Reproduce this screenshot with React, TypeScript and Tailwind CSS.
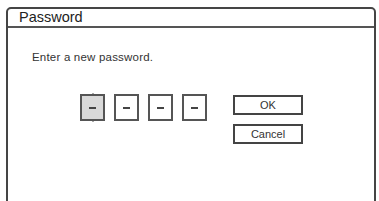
export default function App() {
  const font = { fontFamily: '"Liberation Sans", Arial, sans-serif' };
  return (
    <div className="w-[379px] h-[201px] overflow-hidden bg-white pt-[7px] pl-[6px]" style={font}>
      <div className="w-[370px] h-[230px] border-2 border-[#454545] rounded-t-[5px] flex flex-col">
        <div className="h-[19px] border-b-2 border-[#555] pl-[11px] text-[14.5px] leading-[17px] text-[#222]">
          Password
        </div>
        <div className="pt-[23px] pl-[24px] text-[11.5px] leading-[13px] text-[#333] tracking-[0.2px]">
          Enter a new password.
        </div>
        <div className="flex items-start pt-[30px] pl-[72px]">
          <div className="flex gap-[9px]">
            <div className="relative w-[25px] h-[27px] border-2 border-[#555] bg-[#d9d9d9] flex items-center justify-center">
              <div className="w-[7px] h-[2px] bg-[#444]" />
              <div className="absolute -top-[3px] left-1/2 -translate-x-1/2 w-0 h-0 border-l-[3px] border-r-[3px] border-b-[3px] border-l-transparent border-r-transparent border-b-[#555]" />
              <div className="absolute -bottom-[3px] left-1/2 -translate-x-1/2 w-0 h-0 border-l-[3px] border-r-[3px] border-t-[3px] border-l-transparent border-r-transparent border-t-[#555]" />
            </div>
            {[0, 1, 2].map((i) => (
              <div key={i} className="w-[25px] h-[27px] border-2 border-[#555] bg-white flex items-center justify-center">
                <div className="w-[7px] h-[2px] bg-[#444]" />
              </div>
            ))}
          </div>
          <div className="flex flex-col gap-[9px] ml-[26px] pt-[1px]">
            <div className="w-[70px] h-[20px] border-2 border-[#444] flex items-center justify-center text-[11px] text-[#333]">
              OK
            </div>
            <div className="w-[70px] h-[20px] border-2 border-[#444] flex items-center justify-center text-[11px] text-[#333]">
              Cancel
            </div>
          </div>
        </div>
      </div>
    </div>
  );
}
